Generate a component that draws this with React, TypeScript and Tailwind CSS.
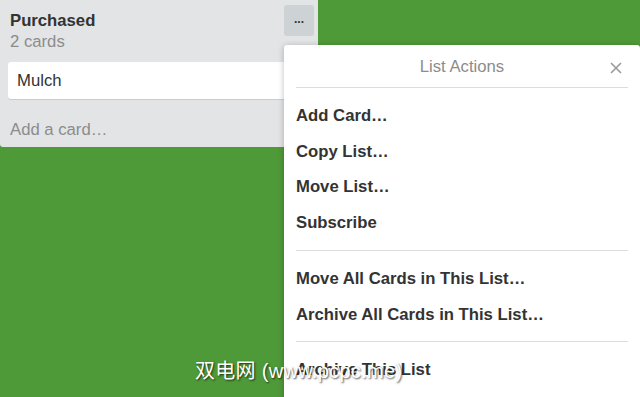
import React from "react";

const font = { fontFamily: '"Liberation Sans", Arial, "Noto Sans CJK SC", sans-serif' };

function Item({ children }: { children: React.ReactNode }) {
  return (
    <div className="h-[35.5px] flex items-center text-[16.7px] font-bold text-[#333]">{children}</div>
  );
}

export default function App() {
  return (
    <div className="relative w-[640px] h-[397px] overflow-hidden bg-[#4f9a38]" style={font}>
      <div className="w-[318px] h-[147px] bg-[#e2e4e6] rounded-b-[3px] flex flex-col">
        <div className="flex justify-between pl-[10px] pr-[4px] pt-[5px]">
          <div className="flex flex-col">
            <div className="text-[16.7px] font-bold text-[#333] leading-[20px] pt-[6px]">Purchased</div>
            <div className="text-[16.7px] text-[#8c8c8c] leading-[20px] mt-[1px]">2 cards</div>
          </div>
          <div className="w-[30px] h-[31px] rounded-[3px] bg-[#cdd2d4] flex items-center justify-center text-[#333] text-[12px] font-bold leading-none pb-[4px]">
            ...
          </div>
        </div>
        <div className="mx-[8px] mt-[10px] h-[37px] bg-white rounded-[3px] shadow-[0_1px_0_#ccc] flex items-center pl-[9px] text-[16.7px] text-[#333]">
          Mulch
        </div>
        <div className="pl-[10px] mt-[18px] text-[16.7px] text-[#8c8c8c]">Add a card…</div>
      </div>

      <div className="absolute left-[284px] top-[45px] w-[356px] h-[360px] bg-white rounded-[3px] shadow-[0_1px_6px_rgba(0,0,0,0.25)] px-[12px]">
        <div className="relative h-[43px] border-b border-[#dcdcdc] flex items-center justify-center">
          <span className="text-[16.7px] text-[#8c8c8c] pt-[2px]">List Actions</span>
          <svg className="absolute right-[6px] top-[17px]" width="12" height="12" viewBox="0 0 12 12">
            <path d="M1 1L11 11M11 1L1 11" stroke="#999" strokeWidth="1.6" />
          </svg>
        </div>
        <div className="pt-[10px] pb-[10px] border-b border-[#dcdcdc]">
          <Item>Add Card…</Item>
          <Item>Copy List…</Item>
          <Item>Move List…</Item>
          <Item>Subscribe</Item>
        </div>
        <div className="pt-[10px] pb-[9px] border-b border-[#dcdcdc]">
          <Item>Move All Cards in This List…</Item>
          <Item>Archive All Cards in This List…</Item>
        </div>
        <div className="pt-[10px]">
          <Item>Archive This List</Item>
        </div>
      </div>

      <div
        className="absolute left-[195px] top-[358px] text-white text-[20px] leading-[26px] whitespace-nowrap tracking-[0.3px]"
        style={{ ...font, textShadow: "1px 1px 2px rgba(0,0,0,0.7)" }}
      >
        双电网 (www.pcpc.me)
      </div>
    </div>
  );
}
